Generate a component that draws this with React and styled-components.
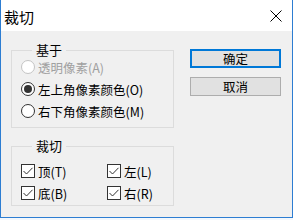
import React from 'react';
import styled, { createGlobalStyle } from 'styled-components';

const Global = createGlobalStyle`
  html, body { margin: 0; padding: 0; background: #f3f8fd; }
  body { font-family: "Noto Sans CJK SC", "Microsoft YaHei", sans-serif; }
`;

const Window = styled.div`
  width: 293px;
  height: 218px;
  box-sizing: border-box;
  border: 1px solid #2d7dd2;
  border-top: none;
  background: #f0f0f0;
  display: flex;
  flex-direction: column;
`;

const TitleBar = styled.div`
  height: 31px;
  background: #fff;
  display: flex;
  align-items: center;
  justify-content: space-between;
  padding: 0 10px 0 3px;
  flex-shrink: 0;
`;

const Title = styled.div`
  font-size: 15px;
  color: #000;
  line-height: 1;
  margin-top: 2px;
`;

const Body = styled.div`
  display: flex;
  padding: 11px 10px 0 10px;
  gap: 16px;
`;

const Left = styled.div`
  width: 163px;
  display: flex;
  flex-direction: column;
  gap: 10px;
`;

const Group = styled.fieldset`
  margin: 0;
  border: 1px solid #dcdcdc;
  padding: ${p => p.$pad};
  min-width: 0;
`;

const Legend = styled.legend`
  font-size: 13px;
  line-height: 16px;
  padding: 0 4px;
  margin-left: 11px;
  color: #000;
`;

const List = styled.div`
  display: flex;
  flex-direction: column;
  margin-top: -2px;
`;

const Row = styled.div`
  height: ${p => p.$h}px;
  display: flex;
  align-items: center;
  font-size: 12.5px;
  color: ${p => (p.$disabled ? '#a0a0a0' : '#000')};
  white-space: nowrap;
`;

const Radio = styled.span`
  width: 14px;
  height: 14px;
  box-sizing: border-box;
  border-radius: 50%;
  border: 1px solid ${p => (p.$disabled ? '#c4c4c4' : '#333')};
  background: #fff;
  margin-right: 3px;
  display: flex;
  align-items: center;
  justify-content: center;
  &::after {
    content: '';
    width: 8px;
    height: 8px;
    border-radius: 50%;
    background: ${p => (p.$checked ? '#333' : 'transparent')};
  }
`;

const Box = styled.span`
  width: 14px;
  height: 14px;
  box-sizing: border-box;
  border: 1px solid #333;
  background: #fff;
  margin-right: 3px;
  display: flex;
  align-items: center;
  justify-content: center;
`;

const Grid = styled.div`
  display: grid;
  grid-template-columns: 86px 1fr;
`;

const Right = styled.div`
  display: flex;
  flex-direction: column;
  gap: 9px;
  padding-top: 7px;
`;

const Button = styled.div`
  width: 91px;
  height: 19px;
  box-sizing: border-box;
  background: #e1e1e1;
  border: ${p => (p.$primary ? '2px solid #0078d7' : '1px solid #adadad')};
  display: flex;
  align-items: center;
  justify-content: center;
  font-size: 12.5px;
  color: #000;
`;

const Check = () => (
  <svg width="12" height="12" viewBox="0 0 12 12">
    <path d="M1.5 6 L4.5 9 L10.5 2.8" fill="none" stroke="#333" strokeWidth="1" />
  </svg>
);

const Close = () => (
  <svg width="12" height="12" viewBox="0 0 12 12">
    <path d="M0.5 0.5 L11.5 11.5 M11.5 0.5 L0.5 11.5" stroke="#000" strokeWidth="1" />
  </svg>
);

const radios = [
  { label: '透明像素(A)', disabled: true },
  { label: '左上角像素颜色(O)', checked: true },
  { label: '右下角像素颜色(M)' },
];

const checks = ['顶(T)', '左(L)', '底(B)', '右(R)'];

export default function App() {
  return (
    <>
      <Global />
      <Window>
        <TitleBar>
          <Title>裁切</Title>
          <Close />
        </TitleBar>
        <Body>
          <Left>
            <Group $pad="0 8px 5px 9px">
              <Legend>基于</Legend>
              <List>
                {radios.map(r => (
                  <Row key={r.label} $h={22} $disabled={r.disabled}>
                    <Radio $disabled={r.disabled} $checked={r.checked} />
                    {r.label}
                  </Row>
                ))}
              </List>
            </Group>
            <Group $pad="6px 8px 1px 9px">
              <Legend>裁切</Legend>
              <Grid>
                {checks.map(c => (
                  <Row key={c} $h={22}>
                    <Box><Check /></Box>
                    {c}
                  </Row>
                ))}
              </Grid>
            </Group>
          </Left>
          <Right>
            <Button $primary>确定</Button>
            <Button>取消</Button>
          </Right>
        </Body>
      </Window>
    </>
  );
}
